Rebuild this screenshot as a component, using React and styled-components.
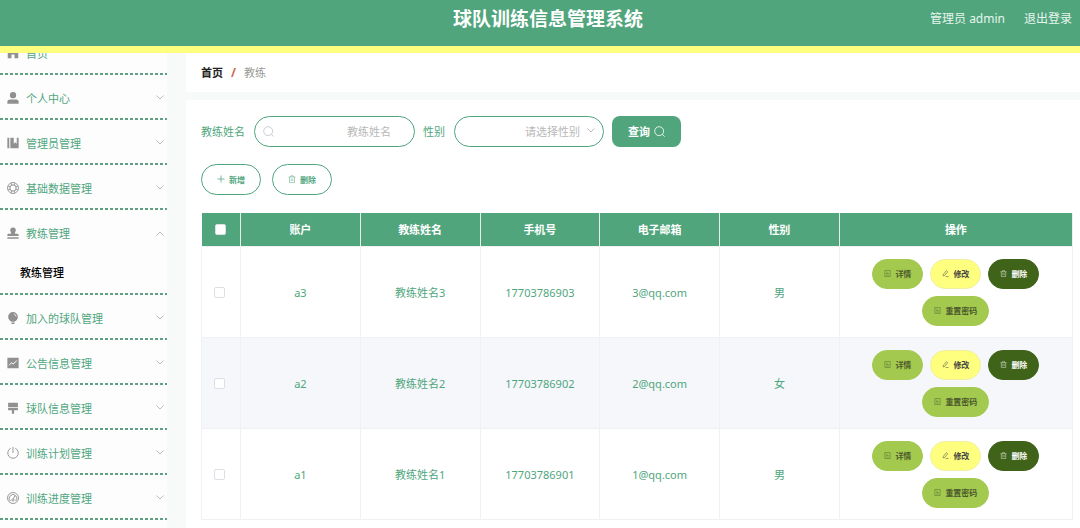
import React from 'react'
import styled, { createGlobalStyle } from 'styled-components'

const GlobalStyle = createGlobalStyle`
    * {
        box-sizing: border-box;
    }
    body {
        margin: 0;
        background-color: #f8faf9;
        font-family: 'Noto Sans', 'Noto Sans CJK SC', sans-serif;
        font-size: 11px;
        color: #4fa67d;
    }
    button,
    input,
    select {
        font-family: inherit;
    }
`
const Page = styled.div`
    height: 100vh;
    display: flex;
    flex-direction: column;
    overflow: hidden;
`
const Header = styled.header`
    flex: none;
    display: grid;
    grid-template-columns: 1fr auto 1fr;
    height: 53px;
    padding: 0 8px 0 24px;
    line-height: 38px;
    background-color: #50a57d;
    border-bottom: 7px solid #ffff7f;
    color: #fff;
`
const Title = styled.h1`
    grid-column: 2;
    margin: 0;
    font-size: 19px;
    font-weight: bold;
`
const UserBar = styled.div`
    display: flex;
    justify-content: flex-end;
    gap: 19px;
    font-size: 12px;
    color: #e8f5ee;
`
const LogoutLink = styled.a`
    color: inherit;
    text-decoration: none;
`
const Body = styled.div`
    flex: 1;
    min-height: 0;
    display: flex;
    gap: 19px;
`
const Sidebar = styled.nav`
    flex: none;
    width: 167px;
    overflow: hidden;
    background-color: #fdfdfd;
`
/* the list is scrolled a little, the first entry is half under the header */
const MenuList = styled.ul`
    margin: -23px 0 0;
    padding: 0;
    list-style: none;
`
/* a native dashed border has dashes that are too long here */
const MenuItem = styled.li`
    padding-bottom: 2px;
    background: repeating-linear-gradient(90deg, #5fa084 0 3px, transparent 3px 5px) bottom / 100% 2px no-repeat;
`
const MenuButton = styled.button`
    display: flex;
    align-items: center;
    gap: 7px;
    width: 100%;
    height: 43px;
    padding: 2px 3px 0 7px;
    border: none;
    background: none;
    font-size: 11px;
    color: #4fa67d;
    text-align: left;
    cursor: pointer;
    & > svg:first-child {
        color: #909090;
    }
`
const MenuText = styled.span`
    flex: 1;
`
const SubLink = styled.a`
    display: block;
    height: 40px;
    padding-left: 20px;
    line-height: 40px;
    font-weight: 500;
    color: #000;
    text-decoration: none;
`
const Arrow = styled.svg`
    width: 8px;
    height: 8px;
    color: #bbb;
    transform: ${props => (props.$open ? 'rotate(180deg)' : 'none')};
`
const Main = styled.main`
    flex: 1;
    min-width: 0;
    display: flex;
    flex-direction: column;
    gap: 8px;
`
const Breadcrumb = styled.nav`
    display: flex;
    align-items: center;
    gap: 8px;
    height: 39px;
    padding-left: 15px;
    background-color: #fff;
    color: #999;
`
const HomeLink = styled.a`
    font-weight: bold;
    color: #222;
    text-decoration: none;
`
const Slash = styled.span`
    font-size: 12px;
    font-weight: bold;
    color: #c96a50;
`
const Content = styled.section`
    flex: 1;
    padding: 16px 7px 8px 15px;
    background-color: #fff;
`
const SearchForm = styled.form`
    display: flex;
    align-items: center;
    gap: 8px;
`
const Label = styled.label`
    padding-right: 1px;
`
const Field = styled.div`
    display: flex;
    align-items: center;
    width: ${props => props.$width};
    height: 31px;
    padding: 0 8px;
    border: 1px solid #50a57d;
    border-radius: 16px;
    color: #c0c4cc;
`
const TextInput = styled.input`
    flex: 1;
    min-width: 0;
    padding: 0 15px 0 0;
    border: none;
    outline: none;
    background: none;
    font-size: 11px;
    text-align: right;
    color: #666;
    &::placeholder {
        color: #b8b8b8;
    }
`
const Select = styled.select`
    flex: 1;
    min-width: 0;
    padding: 0 7px 0 0;
    border: none;
    outline: none;
    appearance: none;
    background: none;
    font-size: 11px;
    text-align-last: right;
    color: #b8b8b8;
`
const SearchButton = styled.button`
    display: flex;
    align-items: center;
    justify-content: center;
    gap: 4px;
    width: 69px;
    height: 31px;
    padding: 0;
    border: none;
    border-radius: 8px;
    background-color: #50a57d;
    font-size: 11px;
    font-weight: bold;
    color: #fff;
    cursor: pointer;
`
const Toolbar = styled.div`
    display: flex;
    gap: 11px;
    margin: 17px 0 18px;
`
const PillButton = styled.button`
    display: flex;
    align-items: center;
    justify-content: center;
    gap: 4px;
    height: ${props => (props.$outline ? '31px' : '30px')};
    padding: 0 ${props => (props.$outline ? '15px' : '11px')};
    border: 1px solid ${props => props.$line};
    border-radius: 16px;
    background-color: ${props => props.$bg};
    font-size: 8px;
    font-weight: bold;
    color: ${props => props.$color};
    cursor: pointer;
`
const Table = styled.table`
    width: 100%;
    table-layout: fixed;
    border-collapse: collapse;
`
const HeadCell = styled.th`
    width: ${props => props.$width};
    height: 34px;
    padding: 0;
    border-right: 1px solid #e8f2ed;
    background-color: #50a57d;
    font-weight: bold;
    color: #fff;
`
const Row = styled.tr`
    background-color: ${props => (props.$striped ? '#f5f7fa' : '#fff')};
`
const Cell = styled.td`
    height: 91px;
    padding: 0 ${props => props.$pad || '0'};
    border: 1px solid #eff1f5;
    text-align: center;
`
const CheckCell = styled(Cell)`
    padding-right: 4px;
`
const Checkbox = styled.input`
    display: block;
    width: 11px;
    height: 11px;
    margin: 0 auto;
    appearance: none;
    border: 1px solid #dcdfe6;
    border-radius: 2px;
    background-color: #fff;
    &:checked {
        background-color: #50a57d;
    }
`
const Actions = styled.div`
    display: flex;
    flex-wrap: wrap;
    justify-content: center;
    gap: 7px;
`

const ICONS = {
    home: <path d='M8 1 1 6v9h5v-5h4v5h5V6z' fill='currentColor' />,
    user: <path d='M8 0a4.200 4.200 0 1 1 0 8.400A4.200 4.200 0 0 1 8 0zM.5 15.500v-3q0-2.500 3.500-2.500h8q3.500 0 3.500 2.500v3z' fill='currentColor' />,
    book: <path d='M.5 1H3v14H.5zM4.500 1H9v8l2-2 2 2V1h2.500v14h-11z' fill='currentColor' />,
    help: (
        <g fill='none' stroke='currentColor' strokeWidth='1.200'>
            <circle cx='8' cy='8' r='7.300' />
            <circle cx='8' cy='8' r='4.200' />
            <path d='M1.500 5.500l3 1M5.500 1.500l1 3M10.500 1.500l-1 3M14.500 5.500l-3 1M14.500 10.500l-3-1M10.500 14.500l-1-3M5.500 14.500l1-3M1.500 10.500l3-1' />
        </g>
    ),
    stamp: <path d='M8 .5a3.800 3.800 0 0 1 3.200 5.800q-1 1.500-.5 2.700H14q1.500 0 1.500 1.500V12H.5v-1.500Q.5 9 2 9h3.300q.5-1.200-.5-2.700A3.800 3.800 0 0 1 8 .5zM.5 13.500h15v2H.5z' fill='currentColor' />,
    balloon: (
        <>
            <path d='M8 0a6.500 6.500 0 0 1 6.500 6.500c0 3-2.500 5.500-4.500 6.500H6C4 12 1.500 9.500 1.500 6.500A6.500 6.500 0 0 1 8 0zM6 14h4v2H6z' fill='currentColor' />
            <path d='M9 2.500q3 .5 3 3.500' fill='none' stroke='#fff' />
        </>
    ),
    chart: (
        <>
            <path d='M.5 1h15v14H.5z' fill='currentColor' />
            <path d='M3 11l3-3.500 2 2L13 5' fill='none' stroke='#fff' strokeWidth='1.300' />
        </>
    ),
    brush: <path d='M1.500 1h13v6h-13zM1.500 8h13v3H9.500v4.500h-3V11h-5z' fill='currentColor' />,
    power: (
        <g fill='none' stroke='currentColor' strokeWidth='1.200'>
            <path d='M8 0v8M5 1.700a7 7 0 1 0 6 0' />
        </g>
    ),
    meter: (
        <g fill='none' stroke='currentColor' strokeWidth='1.200'>
            <circle cx='8' cy='8' r='7.300' />
            <path d='M4.500 12a5 5 0 1 1 7 0M10.500 5 8.500 9' />
            <circle cx='8' cy='10.500' r='1.500' />
        </g>
    ),
    search: (
        <g fill='none' stroke='currentColor' strokeWidth='1.200'>
            <circle cx='7.500' cy='7.500' r='6.500' />
            <path d='M12 12l3.500 3.500' />
        </g>
    ),
    plus: <path d='M8 1v14M1 8h14' fill='none' stroke='currentColor' strokeWidth='1.500' />,
    trash: <path d='M1 4h14M5.500 4V1.500h5V4M3 4v11h10V4M6.500 7v5M9.500 7v5' fill='none' stroke='currentColor' />,
    detail: <path d='M2 1h12v14H2zM5 5h3M5 8h6M5 11.500h6' fill='none' stroke='currentColor' />,
    edit: <path d='M3 10l7-8.500 3 2.500-7 8.500-3.500 1zM8 15h7' fill='none' stroke='currentColor' strokeWidth='1.200' />,
}

function Icon({ name, size }) {
    return (
        <svg width={size} height={size} viewBox='0 0 16 16' aria-hidden='true'>
            {ICONS[name]}
        </svg>
    )
}

function Chevron({ open }) {
    return (
        <Arrow $open={open} viewBox='0 0 8 8' aria-hidden='true'>
            <path d='M0.500 1.500 4 5l3.500-3.500' fill='none' stroke='currentColor' />
        </Arrow>
    )
}

const menus = [
    { icon: 'home', text: '首页', leaf: true },
    { icon: 'user', text: '个人中心' },
    { icon: 'book', text: '管理员管理' },
    { icon: 'help', text: '基础数据管理' },
    { icon: 'stamp', text: '教练管理', child: '教练管理' },
    { icon: 'balloon', text: '加入的球队管理' },
    { icon: 'chart', text: '公告信息管理' },
    { icon: 'brush', text: '球队信息管理' },
    { icon: 'power', text: '训练计划管理' },
    { icon: 'meter', text: '训练进度管理' },
]

const columns = ['账户', '教练姓名', '手机号', '电子邮箱', '性别']

const coaches = [
    { account: 'a3', name: '教练姓名3', phone: '17703786903', email: '3@qq.com', sex: '男' },
    { account: 'a2', name: '教练姓名2', phone: '17703786902', email: '2@qq.com', sex: '女' },
    { account: 'a1', name: '教练姓名1', phone: '17703786901', email: '1@qq.com', sex: '男' },
]

const actions = [
    { icon: 'detail', text: '详情', bg: '#a3c94f', line: '#a3c94f', color: '#4c5a2c' },
    { icon: 'edit', text: '修改', bg: '#ffff7f', line: '#f0f0a0', color: '#444' },
    { icon: 'trash', text: '删除', bg: '#3f6319', line: '#3f6319', color: '#fff' },
    { icon: 'detail', text: '重置密码', bg: '#a3c94f', line: '#a3c94f', color: '#4c5a2c' },
]

function CoachRow({ coach, striped }) {
    return (
        <Row $striped={striped}>
            <CheckCell>
                <Checkbox type='checkbox' aria-label={coach.account} />
            </CheckCell>
            <Cell>{coach.account}</Cell>
            <Cell>{coach.name}</Cell>
            <Cell>{coach.phone}</Cell>
            <Cell>{coach.email}</Cell>
            <Cell>{coach.sex}</Cell>
            <Cell $pad='28px'>
                <Actions>
                    {actions.map(item => (
                        <PillButton key={item.text} type='button' $bg={item.bg} $line={item.line} $color={item.color}>
                            <Icon name={item.icon} size={7} />
                            {item.text}
                        </PillButton>
                    ))}
                </Actions>
            </Cell>
        </Row>
    )
}

export default function App() {
    return (
        <Page>
            <GlobalStyle />
            <Header>
                <Title>球队训练信息管理系统</Title>
                <UserBar>
                    <span>管理员 admin</span>
                    <LogoutLink href='#logout'>退出登录</LogoutLink>
                </UserBar>
            </Header>
            <Body>
                <Sidebar>
                    <MenuList>
                        {menus.map(item => (
                            <MenuItem key={item.text}>
                                <MenuButton type='button'>
                                    <Icon name={item.icon} size={12} />
                                    <MenuText>{item.text}</MenuText>
                                    {!item.leaf && <Chevron open={Boolean(item.child)} />}
                                </MenuButton>
                                {item.child && <SubLink href='#coach'>{item.child}</SubLink>}
                            </MenuItem>
                        ))}
                    </MenuList>
                </Sidebar>
                <Main>
                    <Breadcrumb>
                        <HomeLink href='#home'>首页</HomeLink>
                        <Slash>/</Slash>
                        <span>教练</span>
                    </Breadcrumb>
                    <Content>
                        <SearchForm>
                            <Label htmlFor='name'>教练姓名</Label>
                            <Field $width='161px'>
                                <Icon name='search' size={11} />
                                <TextInput id='name' placeholder='教练姓名' />
                            </Field>
                            <Label htmlFor='sex'>性别</Label>
                            <Field $width='150px'>
                                <Select id='sex' defaultValue=''>
                                    <option value=''>请选择性别</option>
                                    <option value='男'>男</option>
                                    <option value='女'>女</option>
                                </Select>
                                <Chevron />
                            </Field>
                            <SearchButton type='button'>
                                查询
                                <Icon name='search' size={11} />
                            </SearchButton>
                        </SearchForm>
                        <Toolbar>
                            <PillButton type='button' $outline $bg='#fff' $line='#50a57d' $color='#4fa67d'>
                                <Icon name='plus' size={8} />
                                新增
                            </PillButton>
                            <PillButton type='button' $outline $bg='#fff' $line='#50a57d' $color='#4fa67d'>
                                <Icon name='trash' size={8} />
                                删除
                            </PillButton>
                        </Toolbar>
                        <Table>
                            <thead>
                                <tr>
                                    <HeadCell $width='39px'>
                                        <Checkbox type='checkbox' aria-label='全选' />
                                    </HeadCell>
                                    {columns.map(text => (
                                        <HeadCell key={text} $width='13.75%'>
                                            {text}
                                        </HeadCell>
                                    ))}
                                    <HeadCell>操作</HeadCell>
                                </tr>
                            </thead>
                            <tbody>
                                {coaches.map((coach, index) => (
                                    <CoachRow key={coach.account} coach={coach} striped={index % 2 === 1} />
                                ))}
                            </tbody>
                        </Table>
                    </Content>
                </Main>
            </Body>
        </Page>
    )
}
